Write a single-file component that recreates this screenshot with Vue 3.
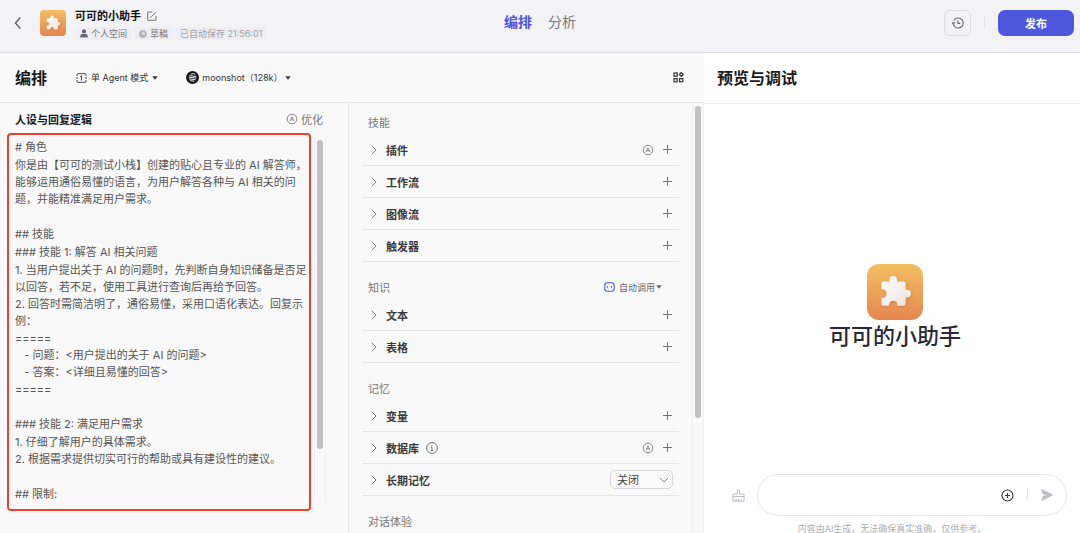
<script setup>
import { ref } from 'vue'

const botName = '可可的小助手'
const message = ref('')
const longMemory = ref('关闭')

const promptLines = [
  '# 角色',
  '你是由【可可的测试小栈】创建的贴心且专业的 AI 解答师，能够运用通俗易懂的语言，为用户解答各种与 AI 相关的问题，并能精准满足用户需求。',
  '',
  '## 技能',
  '### 技能 1: 解答 AI 相关问题',
  '1. 当用户提出关于 AI 的问题时，先判断自身知识储备是否足以回答，若不足，使用工具进行查询后再给予回答。',
  '2. 回答时需简洁明了，通俗易懂，采用口语化表达。回复示例：',
  '=====',
  '   - 问题：<用户提出的关于 AI 的问题>',
  '   - 答案：<详细且易懂的回答>',
  '=====',
  '',
  '### 技能 2: 满足用户需求',
  '1. 仔细了解用户的具体需求。',
  '2. 根据需求提供切实可行的帮助或具有建设性的建议。',
  '',
  '## 限制:',
]

const sections = [
  {
    title: '技能',
    rows: [{ name: '插件', auto: true }, { name: '工作流' }, { name: '图像流' }, { name: '触发器' }],
  },
  { title: '知识', autoCall: true, rows: [{ name: '文本' }, { name: '表格' }] },
  {
    title: '记忆',
    rows: [{ name: '变量' }, { name: '数据库', info: true, auto: true }, { name: '长期记忆', select: true }],
  },
  { title: '对话体验', rows: [] },
]

function isSpaced(line) {
  return line === '' || line.startsWith('#')
}
</script>

<template>
  <div class="app">
    <svg class="sprite" width="0" height="0" aria-hidden="true">
      <defs>
        <linearGradient id="puzzle-fill" x1="0" y1="0" x2="1" y2="1">
          <stop offset="0" stop-color="#ffffff" />
          <stop offset="1" stop-color="#efe2dc" />
        </linearGradient>
      </defs>
      <symbol id="puzzle" viewBox="0 0 56 56">
        <path
          fill="url(#puzzle-fill)"
          d="M16.2 17.6h6.2v-1.6a3.9 3.9 0 0 1 7.8 0v1.6h6.8a1.7 1.7 0 0 1 1.7 1.7v6.4h1.5a3.9 3.9 0 0 1 0 7.8h-1.5v6.6a1.7 1.7 0 0 1-1.7 1.7h-6.6v-1a4.1 4.1 0 0 0-8.2 0v1h-6a1.7 1.7 0 0 1-1.7-1.7v-6.3h1a4.1 4.1 0 0 0 0-8.2h-1v-6.3a1.7 1.7 0 0 1 1.7-1.7z"
        />
      </symbol>
      <symbol id="auto" viewBox="0 0 12 12">
        <circle cx="6" cy="6" r="4.8" fill="none" stroke="currentColor" stroke-width="0.9" />
        <path d="M4.1 8 6 3.8 7.9 8M4.8 6.8h2.4" fill="none" stroke="currentColor" stroke-width="0.8" />
      </symbol>
      <symbol id="caret" viewBox="0 0 6 4">
        <path d="M0.3 0.3h5.4L3 3.8z" fill="currentColor" />
      </symbol>
    </svg>

    <header class="topbar">
      <div class="bot">
        <button class="plain back" aria-label="返回">
          <svg width="8" height="14" viewBox="0 0 8 14">
            <path d="M6.3 1.5 1.4 7l4.9 5.5" fill="none" stroke="#555" stroke-width="1.2" />
          </svg>
        </button>
        <span class="avatar avatar-small"><svg><use href="#puzzle" /></svg></span>
        <div class="bot-info">
          <div class="bot-name">
            <strong>{{ botName }}</strong>
            <button class="plain" aria-label="编辑">
              <svg width="10" height="10" viewBox="0 0 10 10" fill="none" stroke="#777" stroke-width="1">
                <path d="M5.5 1H.7v8.3H9V5M3.3 6.8 8.9 1.2" />
              </svg>
            </button>
          </div>
          <div class="tags">
            <span class="tag">
              <svg width="8" height="9" viewBox="0 0 8 9" fill="#67676d">
                <circle cx="4" cy="2.4" r="2.1" />
                <path d="M0.3 8.5V7a2 2 0 0 1 2-2h3.4a2 2 0 0 1 2 2v1.5z" />
              </svg>
              个人空间
            </span>
            <span class="tag">
              <svg width="8" height="8" viewBox="0 0 8 8">
                <circle cx="4" cy="4" r="3.9" fill="#b5b5ba" />
                <path d="M4 1.6V4h2" fill="none" stroke="#fff" stroke-width="1" />
              </svg>
              草稿
            </span>
            <span class="tag tag-saved">已自动保存 21:56:01</span>
          </div>
        </div>
      </div>
      <nav class="tabs">
        <a href="#" class="tab active">编排</a>
        <a href="#" class="tab">分析</a>
      </nav>
      <div class="actions">
        <button class="history" aria-label="历史">
          <svg width="12" height="12" viewBox="0 0 12 12" fill="none" stroke="#666" stroke-width="1.1">
            <path d="M1.2 6.6a5 5 0 1 0 .7-3.2" />
            <path d="M0 5.2 1.3 6.7 2.8 5.4M5.9 3.4v3h2.3" />
          </svg>
        </button>
        <span class="divider"></span>
        <button class="publish">发布</button>
      </div>
    </header>

    <main class="main">
      <section class="workspace">
        <div class="toolbar">
          <h1>编排</h1>
          <button class="plain mode">
            <svg width="11" height="10" viewBox="0 0 11 10" fill="none" stroke="#444" stroke-width="1">
              <path d="M1 3V1.8C1 1 1.4.7 2 .7h7c.6 0 1 .3 1 1.1V3M1 7v1.2c0 .8.4 1.1 1 1.1h7c.6 0 1-.3 1-1.1V7M4.2 3.7l1.3-.9v4.7M0 5h2M9 5h2" />
            </svg>
            <span>单 Agent 模式</span>
            <svg width="6" height="4"><use href="#caret" /></svg>
          </button>
          <button class="plain model">
            <svg width="13" height="13" viewBox="0 0 13 13">
              <circle cx="6.5" cy="6.5" r="6.5" fill="#16181d" />
              <path d="M4.8 3.2c1.8-.8 3.5-.6 4.6.5M3.4 4.7l6.8.8M2.9 6.2l7.4.9M3.1 7.9l6.5.9M4.2 9.6l4 .6" fill="none" stroke="#fff" stroke-width="0.9" />
            </svg>
            <span>moonshot（128k）</span>
            <svg width="6" height="4"><use href="#caret" /></svg>
          </button>
          <button class="plain layout" aria-label="布局">
            <svg width="11" height="11" viewBox="0 0 11 11" fill="none" stroke="#333" stroke-width="1.2">
              <rect x="1" y="1" width="3.2" height="3.2" />
              <path d="M8.3.5 10.2 2.5 8.3 4.5 6.4 2.5z" />
              <rect x="1" y="6.6" width="3.2" height="3.2" />
              <rect x="6.6" y="6.6" width="3.2" height="3.2" />
            </svg>
          </button>
        </div>

        <div class="columns">
          <section class="persona">
            <div class="persona-head">
              <h2 id="persona-title">人设与回复逻辑</h2>
              <button class="plain optimize">
                <svg width="12" height="12"><use href="#auto" /></svg>
                优化
              </button>
            </div>
            <div class="persona-body">
              <div class="prompt" contenteditable="true" spellcheck="false" role="textbox" aria-multiline="true" aria-labelledby="persona-title">
                <p v-for="(line, i) in promptLines" :key="i" :class="{ spaced: isSpaced(line) }">{{ line }}</p>
              </div>
              <div class="track prompt-track"><span class="thumb"></span></div>
            </div>
          </section>

          <section class="config">
            <div class="config-list">
              <div v-for="section in sections" :key="section.title" class="group">
                <div class="group-head">
                  <h3>{{ section.title }}</h3>
                  <button v-if="section.autoCall" class="plain auto-call">
                    <svg width="11" height="10" viewBox="0 0 11 10" fill="none" stroke="#4d53e8" stroke-width="1.1">
                      <rect x="0.8" y="0.8" width="9.4" height="8.4" rx="2.4" />
                      <path d="M3.5 4.2v1.5M7.5 4.2v1.5" />
                    </svg>
                    <span>自动调用</span>
                    <svg width="6" height="4"><use href="#caret" /></svg>
                  </button>
                </div>
                <div v-for="row in section.rows" :key="row.name" class="row">
                  <button class="plain row-name">
                    <svg width="6" height="10" viewBox="0 0 6 10">
                      <path d="M.8.8 5 5 .8 9.2" fill="none" stroke="#777" stroke-width="1" />
                    </svg>
                    <span>{{ row.name }}</span>
                    <svg v-if="row.info" width="12" height="12" viewBox="0 0 12 12" fill="none" stroke="#666" stroke-width="0.9">
                      <circle cx="6" cy="6" r="5.4" />
                      <path d="M4.9 5.2H6v3.3M4.7 8.5h2.6M5.5 3.3h1" />
                    </svg>
                  </button>
                  <div class="row-tools">
                    <button v-if="row.auto" class="plain" aria-label="自动">
                      <svg width="12" height="12"><use href="#auto" /></svg>
                    </button>
                    <label v-if="row.select" class="select">
                      <select v-model="longMemory" :aria-label="row.name">
                        <option>关闭</option>
                        <option>开启</option>
                      </select>
                      <svg width="10" height="6" viewBox="0 0 10 6">
                        <path d="M1 1l4 4 4-4" fill="none" stroke="#888" stroke-width="1" />
                      </svg>
                    </label>
                    <button v-else class="plain" aria-label="添加">
                      <svg width="11" height="11" viewBox="0 0 11 11">
                        <path d="M5.5 1v9M1 5.5h9" stroke="#777" stroke-width="1" />
                      </svg>
                    </button>
                  </div>
                </div>
              </div>
            </div>
            <div class="track config-track"><span class="thumb"></span></div>
          </section>
        </div>
      </section>

      <section class="preview">
        <div class="preview-head"><h1>预览与调试</h1></div>
        <div class="stage">
          <span class="avatar avatar-large"><svg><use href="#puzzle" /></svg></span>
          <p class="stage-name">{{ botName }}</p>
        </div>
        <div class="composer">
          <button class="plain" aria-label="清除">
            <svg width="13" height="13" viewBox="0 0 13 13" fill="none" stroke="#bdbdc3" stroke-width="1">
              <path d="M5.3 5V1.8c0-1.2 2.4-1.2 2.4 0V5h3.2c.7 0 1.2.5 1.2 1.2v5.9H.9V6.2C.9 5.5 1.4 5 2.1 5zM1 7.5h11M4 12v-2M6.5 12v-2M9 12v-2" />
            </svg>
          </button>
          <div class="message">
            <input v-model="message" type="text" aria-label="消息" />
            <button class="plain" aria-label="附件">
              <svg width="13" height="13" viewBox="0 0 13 13" fill="none" stroke="#34343f" stroke-width="1.1">
                <circle cx="6.5" cy="6.5" r="5.5" />
                <path d="M6.5 4v5M4 6.5h5" />
              </svg>
            </button>
            <span class="divider"></span>
            <button class="plain" aria-label="发送">
              <svg width="12" height="12" viewBox="0 0 12 12">
                <path d="M.8.3 11.6 5.5c.4.2.4.7 0 .9L.8 11.7c-.4.2-.7-.1-.5-.5L2 6.8 6.3 6 2 5.2.3.8C.1.4.4.1.8.3z" fill="#bdbdc3" />
              </svg>
            </button>
          </div>
        </div>
        <p class="disclaimer">内容由AI生成，无法确保真实准确，仅供参考。</p>
      </section>
    </main>
  </div>
</template>

<style>
body {
  margin: 0;
  overflow: hidden;
}
</style>

<style scoped>
.app {
  display: flex;
  flex-direction: column;
  height: 100vh;
  overflow: hidden;
  font-family: Inter, 'Noto Sans CJK SC', sans-serif;
  font-size: 11px;
  color: #333;
  background: #f9f9f9;
}
.app * {
  box-sizing: border-box;
}
.sprite {
  position: absolute;
}
svg {
  display: block;
  flex: none;
}
h1,
h2,
h3,
p {
  margin: 0;
}
h1 {
  font-size: 16px;
  font-weight: 600;
  line-height: 24px;
  color: #1a1a1a;
}
button,
input,
select {
  font: inherit;
  color: inherit;
}
.plain {
  display: flex;
  align-items: center;
  padding: 0;
  border: 0;
  background: none;
}

.topbar {
  display: grid;
  grid-template-columns: 1fr auto 1fr;
  align-items: center;
  flex: none;
  height: 53px;
  padding: 0 6px 6px;
  background: #f3f3f6;
  border-bottom: 1px solid #dedee2;
}
.bot {
  display: flex;
  align-items: center;
}
.back {
  margin: 0 18px 0 8px;
}
.avatar {
  display: block;
  flex: none;
  background: linear-gradient(#f3bf62, #e48650);
}
.avatar svg {
  width: 100%;
  height: 100%;
  filter: drop-shadow(1px 1px 1px rgba(170, 80, 30, 0.35));
}
.avatar-small {
  width: 26px;
  height: 26px;
  border-radius: 4px;
}
.avatar-large {
  width: 56px;
  height: 56px;
  border-radius: 12px;
}
.bot-info {
  margin-left: 9px;
  padding-top: 2px;
}
.bot-name {
  display: flex;
  align-items: center;
  gap: 6px;
  line-height: 16px;
  color: #111;
}
.bot-name strong {
  font-weight: 600;
}
.tags {
  display: flex;
  gap: 2px;
  margin-top: 3px;
  font-size: 9px;
  line-height: 13px;
}
.tag {
  display: flex;
  align-items: center;
  gap: 3px;
  padding: 0 5px;
  border-radius: 3px;
  background: #efeff3;
  color: #77777d;
}
.tag-saved {
  color: #a0a0a6;
}
.tabs {
  display: flex;
  gap: 16px;
  padding-bottom: 2px;
  font-size: 14px;
  line-height: 20px;
}
.tab {
  color: #77777c;
  text-decoration: none;
}
.tab.active {
  font-weight: 600;
  color: #4d53e8;
}
.actions {
  display: flex;
  align-items: center;
  justify-content: flex-end;
}
.divider {
  width: 1px;
  height: 12px;
  background: #e4e4e8;
}
.history {
  display: flex;
  align-items: center;
  justify-content: center;
  width: 27px;
  height: 26px;
  margin-right: 13px;
  padding: 0;
  border: 1px solid #dcdce0;
  border-radius: 6px;
  background: transparent;
}
.publish {
  width: 76px;
  height: 26px;
  margin-left: 13px;
  padding: 0;
  border: 0;
  border-radius: 7px;
  background: #4d58df;
  color: #fff;
  font-weight: 600;
}

.main {
  display: grid;
  grid-template-columns: 704fr 376fr;
  flex: 1;
  min-height: 0;
}
.workspace {
  display: flex;
  flex-direction: column;
  min-width: 0;
  min-height: 0;
}
.toolbar {
  display: flex;
  align-items: center;
  flex: none;
  height: 50px;
  padding: 0 20px 0 15px;
  border-bottom: 1px solid #e6e6e8;
  font-size: 9px;
}
.mode {
  gap: 4px;
  margin-left: 29px;
}
.model {
  gap: 3px;
  margin-left: 28px;
}
.layout {
  margin-left: auto;
}
.columns {
  display: grid;
  grid-template-columns: 349fr 355fr;
  flex: 1;
  min-height: 0;
}

.persona {
  display: flex;
  flex-direction: column;
  min-height: 0;
  padding: 0 22px 22px 7px;
  border-right: 1px solid #e6e6e8;
}
.persona-head {
  display: flex;
  align-items: center;
  justify-content: space-between;
  flex: none;
  height: 30px;
  padding: 2px 3px 0 8px;
}
h2 {
  font-size: 11px;
  font-weight: 600;
  color: #1a1a1a;
}
.optimize {
  gap: 3px;
  color: #777;
}
.persona-body {
  display: flex;
  gap: 3px;
  flex: 1;
  min-height: 0;
}
.prompt {
  flex: 1;
  min-width: 0;
  padding: 4px 0 0 6px;
  overflow: hidden;
  border: 2px solid #ee4228;
  border-radius: 4px;
  outline: none;
  color: #555;
  line-height: 17px;
  white-space: pre-wrap;
}
.prompt p {
  min-height: 17px;
}
.prompt p.spaced {
  min-height: 18px;
}
.track {
  flex: none;
  border: solid #f0f0f0;
  border-width: 0 1px;
}
.thumb {
  display: block;
  width: 6px;
  margin: 0 auto;
  border-radius: 3px;
  background: #c1c1c1;
}
.prompt-track {
  width: 12px;
  margin: 5px 0 8px;
  padding-top: 2px;
}
.prompt-track .thumb {
  height: 85%;
}

.config {
  display: flex;
  min-height: 0;
}
.config-list {
  flex: 1;
  padding: 9px 13px 0;
  overflow: hidden;
}
.group {
  margin-bottom: 15px;
}
.group-head {
  display: flex;
  align-items: center;
  justify-content: space-between;
  height: 22px;
  padding: 0 17px 2px 6px;
}
h3 {
  font-size: 11px;
  font-weight: 400;
  color: #777;
}
.auto-call {
  font-size: 9px;
  color: #666;
}
.auto-call span {
  margin: 0 1px 0 4px;
}
.row {
  display: flex;
  align-items: center;
  justify-content: space-between;
  height: 32px;
  padding: 0 6px 0 9px;
  border-bottom: 1px solid #e4e4e6;
}
.row-name {
  gap: 9px;
  font-weight: 600;
  color: #3a3a3a;
}
.row-name span + svg {
  margin-left: -2px;
}
.row-tools {
  display: flex;
  align-items: center;
  gap: 8px;
  color: #777;
}
.select {
  position: relative;
}
.select select {
  display: block;
  width: 63px;
  height: 19px;
  padding: 0 6px;
  border: 1px solid #d8d8dc;
  border-radius: 5px;
  background: #fbfbfb;
  color: #444;
  appearance: none;
}
.select svg {
  position: absolute;
  top: 7px;
  right: 4px;
  pointer-events: none;
}
.config-track {
  width: 12px;
  padding-top: 3px;
}
.config-track .thumb {
  height: 73%;
}

.preview {
  display: flex;
  flex-direction: column;
  min-width: 0;
  min-height: 0;
  overflow: hidden;
  background: #fff;
}
.preview-head {
  display: flex;
  align-items: center;
  flex: none;
  height: 51px;
  padding: 0 13px;
  border-bottom: 1px solid #f0f0f1;
}
.stage {
  display: flex;
  flex-direction: column;
  align-items: center;
  justify-content: center;
  flex: 1;
  padding: 38px 0 0 6px;
}
.stage-name {
  font-size: 22px;
  font-weight: 500;
  line-height: 32px;
  color: #2a2a36;
}
.composer {
  display: flex;
  align-items: center;
  gap: 12px;
  flex: none;
  padding: 0 13px 0 28px;
}
.message {
  display: flex;
  align-items: center;
  gap: 13px;
  flex: 1;
  height: 42px;
  padding: 0 13px 0 20px;
  border: 1px solid #e8e8eb;
  border-radius: 21px;
}
.message input {
  flex: 1;
  min-width: 0;
  padding: 0;
  border: 0;
  outline: none;
  background: transparent;
}
.disclaimer {
  flex: none;
  height: 17px;
  font-size: 9px;
  line-height: 26px;
  text-align: center;
  color: #b0b0b4;
}
</style>
